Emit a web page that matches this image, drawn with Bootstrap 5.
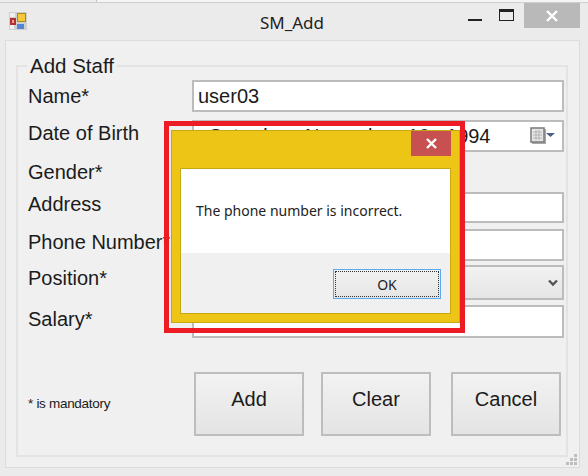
<!DOCTYPE html>
<html lang="en">
<head>
<meta charset="utf-8">
<title>SM_Add</title>
<link href="https://cdn.jsdelivr.net/npm/bootstrap@5.3.0/dist/css/bootstrap.min.css" rel="stylesheet">
<style>
html,body{margin:0;height:476px;width:588px;overflow:hidden}
body{background:#ebebeb;color:#1b1b1b;font-family:"Liberation Sans",Arial,sans-serif;font-size:20px;position:relative}
.behind{height:3px;display:flex;background:#f4f4f4;border-bottom:1px solid #cfcfcf}
.behind i{display:block;width:97px;height:2px;background:#ededed;border-right:1px solid #c4c4c4}
.behind b{display:block;width:2px}
.tbar{height:37px;position:relative;padding:9px 0 0 9px}
.appico{width:18px;height:18px;display:block}
.wtitle{position:absolute;left:0;right:4px;top:9px;text-align:center;font-family:"Noto Sans",sans-serif;font-size:17px;line-height:22px;color:#222}
.wctl{position:absolute;top:0;right:8px;display:flex;align-items:flex-start}
.wmin{width:14px;height:2px;background:#222;margin-top:16px;margin-right:17px}
.wmax{width:15px;height:12px;border:1px solid #222;border-top-width:3px;margin-top:6px;margin-right:10px}
.wclose{width:56px;height:25px;background:#b9b9b9;display:flex;align-items:center;justify-content:center}
.client{position:relative;height:428px;margin-left:5px;margin-right:8px;background:#f0f0f0;border:1px solid #dcdcdc;padding:14px 11px 0 10px}
.gbox{margin:0;height:402px;border:2px solid #e3e3e3;padding:0 2px 0 9px;min-width:0}
.gbox legend{float:none;width:auto;margin:0;padding:0 3px;font-size:20.5px;line-height:22px}
.frow{display:flex;margin-top:0}
.flabel{width:165px;flex:none;display:flex;align-items:center;line-height:22px;white-space:nowrap;padding-left:1px}
.rn{height:32px;margin-top:3px}
.rd{height:32px;margin-top:8px}
.rg{height:40px}
.ra{height:31px}
.rp{height:32px;margin-top:6px}
.rs{height:35px;margin-top:4px}
.rl{height:33px;margin-top:5px}
.up3{padding-bottom:6px}
.up4{padding-bottom:8px}
.up5{padding-bottom:10px}
.frow .form-control,.frow .form-select,.datebox{flex:1;min-width:0;height:100%;border:2px solid #bcbcbc;border-radius:0;padding:0 4px;font-size:20px;color:#1b1b1b;box-shadow:none;background-color:#fff;font-family:inherit}
.datebox{display:flex;align-items:center;padding:0 7px 0 15px;white-space:pre}
.datebox span{flex:1;letter-spacing:-.07px}
.frow .form-select{background:url("data:image/svg+xml,%3Csvg xmlns='http://www.w3.org/2000/svg' width='10' height='8'%3E%3Cpath d='M1 1.5l4 4 4-4' fill='none' stroke='%23555' stroke-width='2.4'/%3E%3C/svg%3E") no-repeat right 4px center,linear-gradient(#f2f2f2,#e5e5e5)}
.fbot{display:flex;align-items:flex-start;margin-top:34px}
.mand{width:167px;flex:none;font-size:13.5px;line-height:16px;margin-top:24px;padding-left:1px;letter-spacing:-.3px;white-space:nowrap}
.bgrp{display:flex}
.btn.wbtn{width:110px;height:64px;border:2px solid #bdbdbd;border-radius:0;background:linear-gradient(#f2f2f2,#e4e4e4);color:#1b1b1b;font-size:20px;padding:0 0 11px;font-family:inherit}
.bg1{margin-right:17px}.bg2{margin-right:20px}
.grip{position:absolute;right:1px;bottom:1px;display:block}
.rbox{position:absolute;left:164px;top:121px;width:301px;height:212px;border:5px solid #ed1c24;padding:4px 0 0 2px}
.dlg{width:289px;height:193px;background:#ecc516;border:1px solid #c9a911;display:flex;flex-direction:column;padding:0 8px 8px 8px}
.dtop{height:37px;display:flex;justify-content:flex-end;flex:none}
.dclose{width:40px;height:25px;background:#c75050;display:flex;align-items:center;justify-content:center;margin-right:0}
.dbody{flex:1;border:1px solid #c9a911;background:#f0f0f0;display:flex;flex-direction:column;font-family:"Noto Sans",sans-serif;color:#222}
.dmsg{height:84px;background:#fff;font-size:14px;line-height:18px;padding:33px 0 0 15px}
.dbtn{flex:1;display:flex;justify-content:flex-end;align-items:flex-start;padding:16px 9px 0 0}
.btn.okb{width:108px;height:30px;border:1px solid #5aa9f5;border-radius:0;padding:0;background:linear-gradient(#f2f2f2,#e5e5e5);color:#222;font-size:14px;display:flex;position:relative;align-items:center;justify-content:center;outline:1px dotted #333;outline-offset:-3px;font-family:inherit}
</style>
</head>
<body>
<div class="behind"><i></i><b></b></div>
<div class="tbar">
  <svg class="appico" viewBox="0 0 18 18"><rect width="18" height="18" fill="#cfcfcf"/><rect x="1" y="1" width="5" height="4" fill="#f0f0f0"/><rect x="1" y="13" width="4" height="4" fill="#f0f0f0"/><rect x="1" y="6" width="6" height="7" fill="#b5302c"/><rect x="3" y="8" width="2" height="3" fill="#e8a09a"/><rect x="8" y="1" width="9" height="9" fill="#a98a20"/><rect x="9" y="2" width="7" height="7" fill="#f3c93a"/><rect x="8" y="12" width="7" height="5" fill="#4f86d8"/></svg>
  <div class="wtitle">SM_Add</div>
  <div class="wctl">
    <div class="wmin"></div>
    <div class="wmax"></div>
    <div class="wclose"><svg width="12" height="12" viewBox="0 0 12 12"><path d="M1 1l10 10M11 1L1 11" stroke="#fff" stroke-width="2.4"/></svg></div>
  </div>
</div>
<div class="client">
  <fieldset class="gbox">
    <legend>Add Staff</legend>
    <div class="frow rn"><label class="flabel">Name*</label><input class="form-control" value="user03"></div>
    <div class="frow rd"><label class="flabel up3">Date of Birth</label><div class="datebox"><span>Saturday , November  10 , 1994</span><svg width="25" height="18" viewBox="0 0 25 18"><rect x="2" y="2" width="14" height="15" fill="#a8a8a8"/><rect x="1" y="1" width="13" height="14" fill="#e6e6e6" stroke="#808080" stroke-width="1.6"/><path d="M3 5h9M3 8h9M3 11h9M6 3v10M9 3v10" stroke="#b4b4b4"/><path d="M16 6h9l-4.500 4z" fill="#4a5f85"/></svg></div></div>
    <div class="frow rg"><label class="flabel">Gender*</label></div>
    <div class="frow ra"><label class="flabel up4">Address</label><input class="form-control"></div>
    <div class="frow rp"><label class="flabel up3">Phone Number*</label><input class="form-control"></div>
    <div class="frow rs"><label class="flabel up5">Position*</label><select class="form-select"></select></div>
    <div class="frow rl"><label class="flabel up3">Salary*</label><input class="form-control"></div>
    <div class="fbot">
      <div class="mand">* is mandatory</div>
      <div class="bgrp">
        <button class="btn wbtn bg1">Add</button>
        <button class="btn wbtn bg2">Clear</button>
        <button class="btn wbtn">Cancel</button>
      </div>
    </div>
  </fieldset>
  <svg class="grip" width="12" height="12" viewBox="0 0 12 12" fill="#bdbdbd"><rect x="8" y="0" width="3" height="3"/><rect x="4" y="4" width="3" height="3"/><rect x="8" y="4" width="3" height="3"/><rect x="0" y="8" width="3" height="3"/><rect x="4" y="8" width="3" height="3"/><rect x="8" y="8" width="3" height="3"/></svg>
</div>
<div class="rbox">
  <div class="dlg">
    <div class="dtop"><div class="dclose"><svg width="11" height="11" viewBox="0 0 11 11"><path d="M1 1l9 9M10 1l-9 9" stroke="#fff" stroke-width="2.4"/></svg></div></div>
    <div class="dbody">
      <div class="dmsg">The phone number is incorrect.</div>
      <div class="dbtn"><button class="btn okb">OK</button></div>
    </div>
  </div>
</div>
<script src="https://cdn.jsdelivr.net/npm/bootstrap@5.3.0/dist/js/bootstrap.bundle.min.js"></script>
</body>
</html>
